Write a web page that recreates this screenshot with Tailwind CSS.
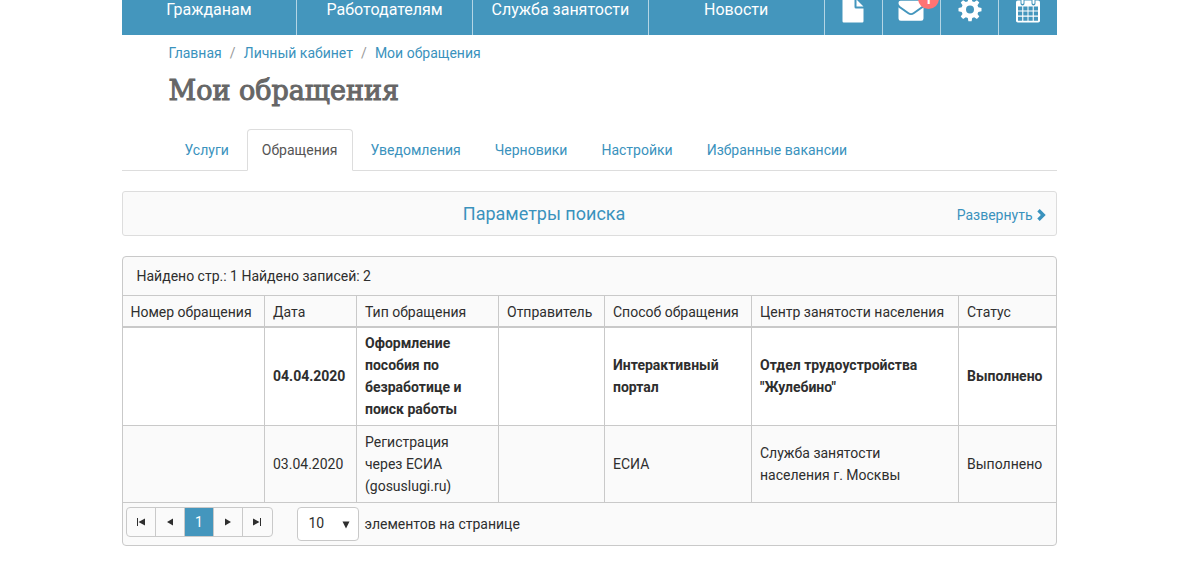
<!DOCTYPE html>
<html lang="ru">
<head>
  <meta charset="UTF-8" />
  <meta name="viewport" content="width=device-width, initial-scale=1.0" />
  <title>Мои обращения</title>
  <script src="https://cdn.jsdelivr.net/npm/@tailwindcss/browser@4"></script>
</head>
<body class="bg-white font-[Roboto,sans-serif] text-sm text-[#2e2e2e] pr-[22px]">
<div class="mx-auto max-w-[935px]">

  <!-- Top navigation -->
  <header class="flex h-[35px] items-end overflow-hidden bg-[#4496bd] text-white">
    <nav class="flex h-[50px] flex-1 divide-x divide-white/60 border-r border-white/60 text-base">
      <a href="#" class="flex flex-1 items-center justify-center">Гражданам</a>
      <a href="#" class="flex flex-1 items-center justify-center">Работодателям</a>
      <a href="#" class="flex flex-1 items-center justify-center">Служба занятости</a>
      <a href="#" class="flex flex-1 items-center justify-center">Новости</a>
    </nav>
    <div class="flex h-[50px] w-[232px] divide-x divide-white/60">
      <a href="#" aria-label="Документы" class="flex flex-1 items-center justify-center">
        <svg class="mt-1 h-7 w-[22px]" viewBox="0 0 22 28" fill="#fff"><path d="M2 0h10.500v9q0 1.500 1.500 1.500h7.500v12.800q0 1.200-1.200 1.200H1.700Q.5 24.500.5 23.300V1.500Q.5 0 2 0zM14.500 1.500l7 7h-7z"/></svg>
      </a>
      <a href="#" aria-label="Уведомления" class="relative flex flex-1 items-center justify-center">
        <svg class="mt-1 h-7 w-[26px]" viewBox="0 0 26 28" fill="#fff"><path d="M2.500 2.800h21q2 0 2 2v.5q0 1.700-1.700 3l-8.800 6.200q-2 1.300-4 0L2.200 8.300Q.5 7 .5 5.300v-.5q0-2 2-2zM.5 9.200q.6.700 1.500 1.300l7.500 5.300q3.500 2.400 7 0l7.500-5.300q.9-.6 1.500-1.300v11.300q0 2.300-2.300 2.300H2.800Q.5 22.800.5 20.500z"/></svg>
        <span class="absolute top-[3px] left-[35px] flex h-[21px] w-[21px] items-center justify-center rounded-full bg-[#ff7373] text-sm font-bold">1</span>
      </a>
      <a href="#" aria-label="Настройки" class="flex flex-1 items-center justify-center">
        <svg class="mt-1 h-7 w-6" viewBox="0 0 24 28" fill="#fff" fill-rule="evenodd"><path d="M10.400 0h3.200l.6 3.200 2 .8 2.700-1.800 2.400 2.400-1.800 2.700.8 2 3.200.6v3.400l-3.200.6-.8 2 1.800 2.700-2.400 2.400-2.700-1.800-2 .8-.6 3.200h-3.200L9.800 20l-2-.8L5.100 21l-2.400-2.400 1.800-2.700-.8-2-3.200-.6V9.900l3.200-.6.8-2-1.800-2.700 2.400-2.400L7.800 4l2-.8zM12 7.600a4 4 0 1 0 0 8 4 4 0 0 0 0-8z"/></svg>
      </a>
      <a href="#" aria-label="Календарь" class="flex flex-1 items-center justify-center">
        <svg class="mt-1 h-7 w-6" viewBox="0 0 24 28"><rect x="0" y="2.500" width="24" height="22" rx="1.800" fill="#fff"/><path d="M2 8.500h4.200v4H2zm5.300 0h4.200v4H7.300zm5.200 0h4.200v4h-4.200zm5.300 0H22v4h-4.200zM2 13.600h4.200v4H2zm5.300 0h4.200v4H7.300zm5.200 0h4.200v4h-4.200zm5.300 0H22v4h-4.200zM2 18.700h4.200v4H2zm5.300 0h4.200v4H7.300zm5.200 0h4.200v4h-4.200zm5.300 0H22v4h-4.200z" fill="#4496bd"/><path d="M6.500 1v4.500M17.500 1v4.500" stroke="#4496bd" stroke-width="4" stroke-linecap="round"/><path d="M6.500 0v5M17.500 0v5" stroke="#fff" stroke-width="2" stroke-linecap="round"/></svg>
      </a>
    </div>
  </header>

  <!-- Breadcrumbs and title -->
  <div class="px-[47px] pt-2">
    <nav class="flex leading-5 text-[#3a92bd]">
      <a href="#">Главная</a>
      <span class="w-[22px] text-center text-[#999]">/</span>
      <a href="#">Личный кабинет</a>
      <span class="w-[22px] text-center text-[#999]">/</span>
      <a href="#">Мои обращения</a>
    </nav>
    <h1 class="mt-[10px] font-['DejaVu_Serif',serif] text-[27px] leading-9 text-[#666] [-webkit-text-stroke:1px_#666]">Мои обращения</h1>
  </div>

  <!-- Tabs -->
  <nav class="mt-5 flex border-b border-[#ddd] pl-[47px] leading-5 text-[#3a92bd]">
    <a href="#" class="-mb-px border border-transparent px-[15px] py-[10px]">Услуги</a>
    <a href="#" class="-mb-px ml-[2px] rounded-t border border-[#ddd] border-b-white bg-white px-[14px] py-[10px] text-[#555]">Обращения</a>
    <a href="#" class="-mb-px ml-px border border-transparent px-4 py-[10px]">Уведомления</a>
    <a href="#" class="-mb-px border border-transparent px-4 py-[10px]">Черновики</a>
    <a href="#" class="-mb-px border border-transparent px-4 py-[10px]">Настройки</a>
    <a href="#" class="-mb-px border border-transparent px-4 py-[10px]">Избранные вакансии</a>
  </nav>

  <!-- Search panel -->
  <section class="mt-5 flex h-[45px] items-center rounded-[3px] border border-[#ddd] bg-[#fafafa] pr-[10px] text-[#3a92bd]">
    <h2 class="flex-1 pl-[9px] text-center text-lg">Параметры поиска</h2>
    <button type="button" class="flex items-center gap-1 pt-[2px]">
      Развернуть
      <svg class="h-3 w-[9px]" viewBox="0 0 9 12" fill="none" stroke="#3a92bd" stroke-width="3.400"><path d="M1.500 1.200 6.300 6l-4.800 4.800"/></svg>
    </button>
  </section>

  <!-- Grid -->
  <section class="mt-5 overflow-hidden rounded border border-[#c9c9c9] bg-[#fafafa]">
    <p class="px-[14px] py-2 leading-[22px]">Найдено стр.: 1 Найдено записей: 2</p>
    <table class="w-full table-fixed border-collapse text-left leading-[22px]">
      <colgroup>
        <col class="w-[142px]" /><col class="w-[92px]" /><col class="w-[142px]" /><col class="w-[106px]" /><col class="w-[147px]" /><col class="w-[207px]" /><col />
      </colgroup>
      <thead>
        <tr class="h-[31px] divide-x divide-[#c9c9c9] border-t border-b-2 border-[#c9c9c9] whitespace-nowrap">
          <th class="pt-[2px] pr-1 pl-2 font-normal">Номер обращения</th>
          <th class="pt-[2px] pr-1 pl-2 font-normal">Дата</th>
          <th class="pt-[2px] pr-1 pl-2 font-normal">Тип обращения</th>
          <th class="pt-[2px] pr-1 pl-2 font-normal">Отправитель</th>
          <th class="pt-[2px] pr-1 pl-2 font-normal">Способ обращения</th>
          <th class="pt-[2px] pr-1 pl-2 font-normal">Центр занятости населения</th>
          <th class="pt-[2px] pr-1 pl-2 font-normal">Статус</th>
        </tr>
      </thead>
      <tbody>
        <tr class="divide-x divide-[#c9c9c9] border-b border-[#c9c9c9] bg-white font-bold">
          <td class="pt-1 pr-[10px] pb-[5px] pl-2"></td>
          <td class="pt-1 pr-[10px] pb-[5px] pl-2">04.04.2020</td>
          <td class="pt-1 pr-[10px] pb-[5px] pl-2">Оформление пособия по безработице и поиск работы</td>
          <td class="pt-1 pr-[10px] pb-[5px] pl-2"></td>
          <td class="pt-1 pr-[10px] pb-[5px] pl-2">Интерактивный портал</td>
          <td class="pt-1 pr-[10px] pb-[5px] pl-2">Отдел трудоустройства "Жулебино"</td>
          <td class="pt-1 pr-[10px] pb-[5px] pl-2">Выполнено</td>
        </tr>
        <tr class="divide-x divide-[#c9c9c9] border-b border-[#c9c9c9]">
          <td class="pt-[5px] pr-[10px] pb-[5px] pl-2"></td>
          <td class="pt-[5px] pr-[10px] pb-[5px] pl-2">03.04.2020</td>
          <td class="pt-[5px] pr-[10px] pb-[5px] pl-2">Регистрация через ЕСИА (gosuslugi.ru)</td>
          <td class="pt-[5px] pr-[10px] pb-[5px] pl-2"></td>
          <td class="pt-[5px] pr-[10px] pb-[5px] pl-2">ЕСИА</td>
          <td class="pt-[5px] pr-[10px] pb-[5px] pl-2">Служба занятости населения г. Москвы</td>
          <td class="pt-[5px] pr-[10px] pb-[5px] pl-2">Выполнено</td>
        </tr>
      </tbody>
    </table>

    <!-- Pager -->
    <div class="flex items-start px-[3px] pt-1 pb-1">
      <div class="flex h-[30px] w-[147px] divide-x divide-[#c9c9c9] overflow-hidden rounded border border-[#c9c9c9]">
        <button type="button" aria-label="Первая" class="flex flex-1 items-center justify-center">
          <svg class="h-2 w-2" viewBox="0 0 8 8" fill="#2e2e2e"><path d="M0 0h1v8H0zM8 .5v7L1.500 4z"/></svg>
        </button>
        <button type="button" aria-label="Назад" class="flex flex-1 items-center justify-center">
          <svg class="h-2 w-2" viewBox="0 0 8 8" fill="#2e2e2e"><path d="M7 .5v7L1 4z"/></svg>
        </button>
        <button type="button" class="flex flex-1 items-center justify-center bg-[#4496bd] text-white">1</button>
        <button type="button" aria-label="Вперёд" class="flex flex-1 items-center justify-center">
          <svg class="h-2 w-2" viewBox="0 0 8 8" fill="#2e2e2e"><path d="M1 .5v7L7 4z"/></svg>
        </button>
        <button type="button" aria-label="Последняя" class="flex flex-1 items-center justify-center">
          <svg class="h-2 w-2" viewBox="0 0 8 8" fill="#2e2e2e"><path d="M7 0h1v8H7zM0 .5v7L6.500 4z"/></svg>
        </button>
      </div>
      <div class="relative ml-6">
        <select id="pageSize" class="h-[34px] w-[62px] appearance-none rounded border border-[#c9c9c9] bg-white pb-[2px] pl-[11px]">
          <option>10</option>
          <option>20</option>
          <option>50</option>
        </select>
        <svg class="pointer-events-none absolute top-[14px] right-[9px] h-2 w-2" viewBox="0 0 8 8" fill="#2e2e2e"><path d="M.5.500h7L4 7.500z"/></svg>
      </div>
      <label for="pageSize" class="ml-[6px] leading-[34px]">элементов на странице</label>
    </div>
  </section>

</div>
</body>
</html>
